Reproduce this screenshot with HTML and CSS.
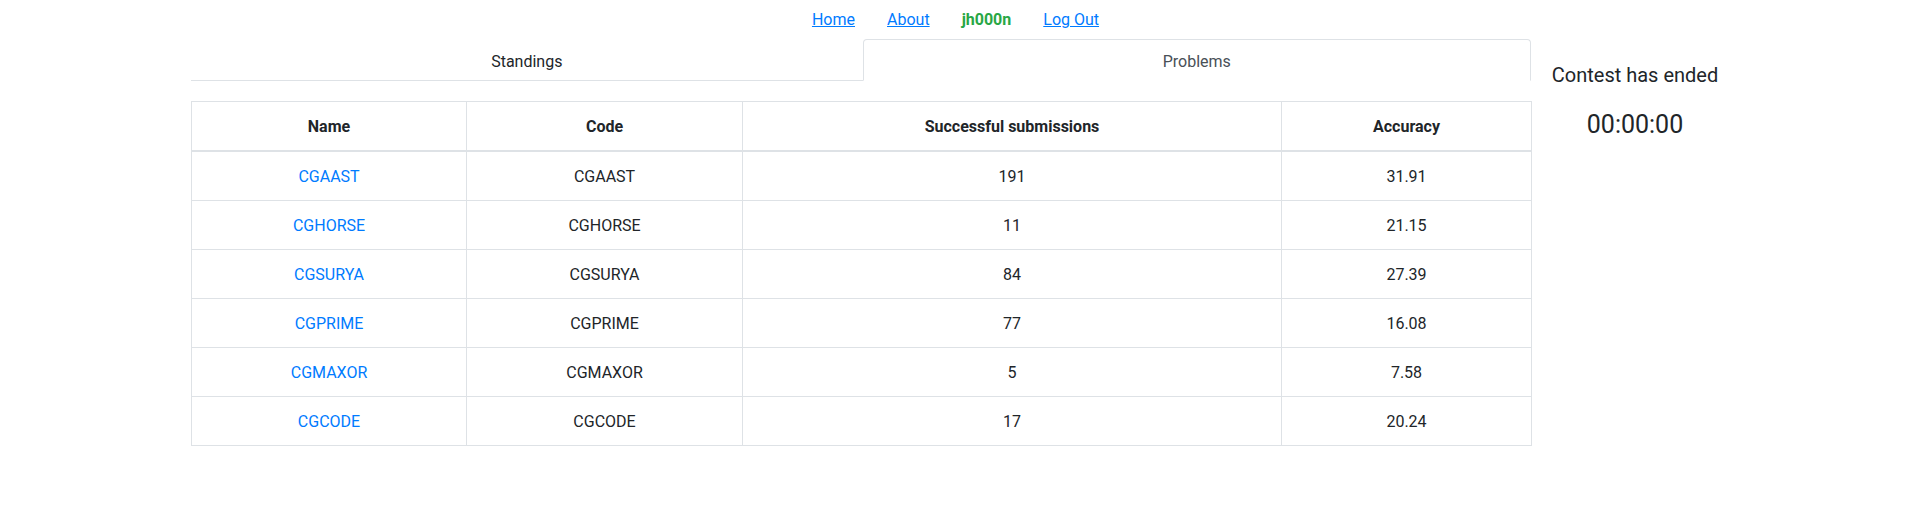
FILE: index.html
```html
<!DOCTYPE html>
<html>
<head>
<meta charset="utf-8">
<link rel="stylesheet" href="styles.css">
</head>
<body>
<nav class="topnav">
  <a class="navlink" href="#">Home</a>
  <a class="navlink" href="#">About</a>
  <span class="user">jh000n</span>
  <a class="navlink" href="#">Log Out</a>
</nav>
<div class="layout">
  <main class="main">
    <ul class="tabs">
      <li class="tab">Standings</li>
      <li class="tab active">Problems</li>
    </ul>
    <table class="grid">
      <colgroup>
        <col class="c-name"><col class="c-code"><col class="c-succ"><col class="c-acc">
      </colgroup>
      <thead>
        <tr><th>Name</th><th>Code</th><th>Successful submissions</th><th>Accuracy</th></tr>
      </thead>
      <tbody>
        <tr><td><a href="#">CGAAST</a></td><td>CGAAST</td><td>191</td><td>31.91</td></tr>
        <tr><td><a href="#">CGHORSE</a></td><td>CGHORSE</td><td>11</td><td>21.15</td></tr>
        <tr><td><a href="#">CGSURYA</a></td><td>CGSURYA</td><td>84</td><td>27.39</td></tr>
        <tr><td><a href="#">CGPRIME</a></td><td>CGPRIME</td><td>77</td><td>16.08</td></tr>
        <tr><td><a href="#">CGMAXOR</a></td><td>CGMAXOR</td><td>5</td><td>7.58</td></tr>
        <tr><td><a href="#">CGCODE</a></td><td>CGCODE</td><td>17</td><td>20.24</td></tr>
      </tbody>
    </table>
  </main>
  <aside class="side">
    <h5 class="status">Contest has ended</h5>
    <div class="timer">00:00:00</div>
  </aside>
</div>
</body>
</html>
```
FILE: styles.css
```css
* { box-sizing: border-box; }
body {
  margin: 0;
  font-family: Roboto, "Liberation Sans", Arial, sans-serif;
  font-size: 16px;
  line-height: 1.5;
  color: #212529;
  background: #fff;
}
.topnav {
  display: flex;
  justify-content: center;
  gap: 32px;
  padding: 8px 0 7px 4px;
  line-height: 24px;
}
.navlink { color: #007bff; text-decoration: underline; }
.user { color: #28a745; font-weight: 700; }
.layout {
  display: flex;
  padding-left: 191px;
}
.main { width: 1340px; }
.tabs {
  display: flex;
  list-style: none;
  margin: 0;
  padding: 0;
  border-bottom: 1px solid #dee2e6;
}
.tab {
  flex: 1 1 auto;
  text-align: center;
  padding: 10px 16px 6px;
  border: 1px solid transparent;
  border-top-left-radius: 4px;
  border-top-right-radius: 4px;
  margin-bottom: -1px;
  color: #212529;
}
.tab.active {
  color: #495057;
  background: #fff;
  border-color: #dee2e6 #dee2e6 #fff;
}
.grid {
  width: 1340px;
  margin-top: 20px;
  border-collapse: collapse;
  table-layout: fixed;
  border: 1px solid #dee2e6;
}
.c-name { width: 275px; }
.c-code { width: 276px; }
.c-succ { width: 539px; }
.c-acc { width: 250px; }
.grid th, .grid td {
  border: 1px solid #dee2e6;
  padding: 13px 12px 11px;
  text-align: center;
  vertical-align: top;
  line-height: 24px;
}
.grid th { font-weight: 700; border-bottom-width: 2px; }
.grid a { color: #007bff; text-decoration: none; }
.side {
  width: 208px;
  text-align: center;
  padding-top: 24px;
}
.status {
  margin: 0;
  font-size: 20px;
  font-weight: 400;
  line-height: 24px;
}
.timer {
  margin-top: 23px;
  font-size: 25px;
  line-height: 30px;
}
```
